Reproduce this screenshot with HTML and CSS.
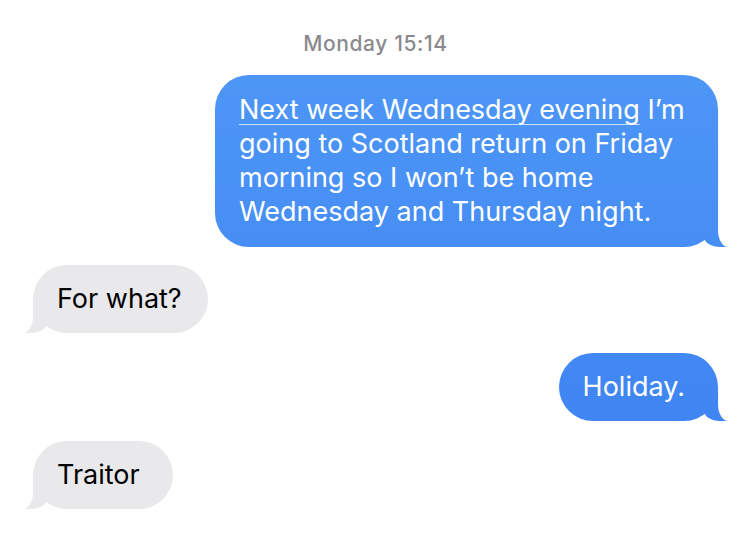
FILE: index.html
```html
<!DOCTYPE html>
<html lang="en">
<head>
<meta charset="utf-8">
<title>Messages</title>
<link rel="stylesheet" href="styles.css">
</head>
<body>
<main class="thread">
  <div class="stamp">Monday 15:14</div>
  <div class="row row-out row-first">
    <div class="bubble out wide"><span class="link">Next week Wednesday evening</span> I’m going to Scotland return on Friday morning so I won’t be home Wednesday and Thursday night.</div>
  </div>
  <div class="row row-in">
    <div class="bubble in q">For what?</div>
  </div>
  <div class="row row-out">
    <div class="bubble out roomy">Holiday.</div>
  </div>
  <div class="row row-in">
    <div class="bubble in roomy">Traitor</div>
  </div>
</main>
</body>
</html>
```
FILE: styles.css
```css
html, body {
  margin: 0;
  padding: 0;
  background: #ffffff;
}
body {
  width: 750px;
  height: 549px;
  overflow: hidden;
  font-family: "Inter", "Liberation Sans", sans-serif;
}
.thread {
  display: flex;
  flex-direction: column;
  padding: 31px 32px 0 33px;
}
.stamp {
  text-align: center;
  font-size: 21px;
  font-weight: 500;
  letter-spacing: 0.6px;
  color: #8a8a8e;
  line-height: 26px;
  margin-bottom: 18px;
}
.row {
  display: flex;
  margin-bottom: 20px;
}
.row-first { margin-bottom: 18px; }
.row-out { justify-content: flex-end; }
.row-in { justify-content: flex-start; }
.bubble {
  position: relative;
  font-size: 27px;
  line-height: 34px;
  padding: 17px 24px;
  border-radius: 34px;
}
.bubble.wide {
  padding: 18px 24px;
  width: 455px;
}
.bubble.q { padding-right: 26px; }
.bubble.roomy { padding-right: 33px; }
.out {
  color: #ffffff;
  background: linear-gradient(180deg, #509af7 0px, #3a7ff2 549px);
  background-attachment: fixed;
}
.in {
  color: #000000;
  background: #e9e9eb;
}
.link {
  text-decoration: underline;
  text-decoration-color: rgba(255, 255, 255, 0.7);
  text-decoration-thickness: 1px;
  text-underline-offset: 5px;
}
.bubble::before,
.bubble::after {
  content: "";
  position: absolute;
  bottom: 0;
  height: 34px;
}
.out::before {
  right: -11px;
  width: 25px;
  background: linear-gradient(180deg, #509af7 0px, #3a7ff2 549px);
  background-attachment: fixed;
  border-bottom-left-radius: 16px 10px;
}
.out::after {
  right: -40px;
  width: 40px;
  background: #ffffff;
  border-bottom-left-radius: 10px 17px;
}
.in::before {
  left: -11px;
  width: 25px;
  background: #e9e9eb;
  border-bottom-right-radius: 16px 10px;
}
.in::after {
  left: -40px;
  width: 40px;
  background: #ffffff;
  border-bottom-right-radius: 10px 17px;
}
```
